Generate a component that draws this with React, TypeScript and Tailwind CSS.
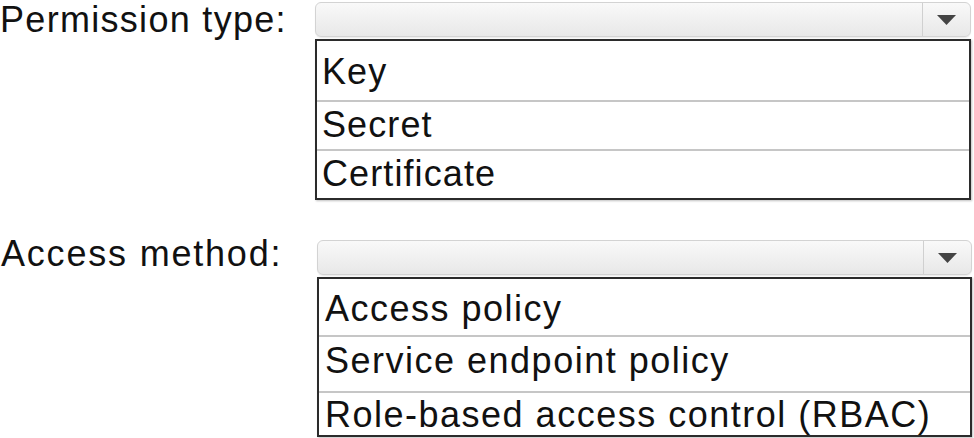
type Option = { label: string; h: string; pb: string };

interface FieldProps {
  label: string;
  labelClass: string;
  topPad: string;
  listPad: string;
  itemTracking: string;
  options: Option[];
}

const font = { fontFamily: '"Liberation Sans", Arial, sans-serif' };

const Field = ({ label, labelClass, topPad, listPad, itemTracking, options }: FieldProps) => (
  <div className="flex items-start">
    {/* Label */}
    <div className={`${labelClass} shrink-0 text-[36px] leading-[40px] text-[#111] whitespace-nowrap`}>
      {label}
    </div>

    {/* Dropdown + open list */}
    <div className={`flex-1 ${topPad}`}>
      <div className="flex h-[35px] rounded-[6px] border border-[#d3d3d3] bg-gradient-to-b from-[#f9f9f9] to-[#e8e8e8] shadow-[0_1px_1px_rgba(0,0,0,0.08)]">
        <div className="flex-1" />
        <div className="flex w-[48px] items-center justify-center border-l border-[#d0d0d0]">
          <svg width="19" height="10" viewBox="0 0 19 10">
            <path d="M0 0 H19 L9.5 10 Z" fill="#444" />
          </svg>
        </div>
      </div>

      <div className="mt-[2px] border-2 border-[#2b2b2b] bg-white shadow-[1px_1px_2px_rgba(0,0,0,0.25)]">
        {options.map((opt, i) => (
          <div key={opt.label}>
            {i > 0 && <div className="h-[2px] bg-[#c6c6c6]" />}
            <div className={`flex items-end ${opt.h} ${opt.pb} ${listPad}`}>
              <span className={`text-[36px] leading-[40px] ${itemTracking} text-[#111] whitespace-nowrap`}>
                {opt.label}
              </span>
            </div>
          </div>
        ))}
      </div>
    </div>
  </div>
);

export default function App() {
  return (
    <div className="w-[974px] h-[438px] overflow-hidden bg-white" style={font}>
      <Field
        label="Permission type:"
        labelClass="w-[315px] tracking-[1.3px]"
        topPad="pt-[2px] mr-[3px]"
        listPad="pl-[5px]"
        itemTracking="tracking-[1.1px]"
        options={[
          { label: 'Key', h: 'h-[59px]', pb: 'pb-[8px]' },
          { label: 'Secret', h: 'h-[47px]', pb: 'pb-[4px]' },
          { label: 'Certificate', h: 'h-[47px]', pb: 'pb-[4px]' },
        ]}
      />

      <div className="mt-[34px]">
        <Field
          label="Access method:"
          labelClass="w-[317px] pl-[1px] tracking-[1.8px]"
          topPad="pt-[6px] mr-[2px]"
          listPad="pl-[6px]"
          itemTracking="tracking-[1.5px]"
          options={[
            { label: 'Access policy', h: 'h-[56px]', pb: 'pb-[6px]' },
            { label: 'Service endpoint policy', h: 'h-[54px]', pb: 'pb-[10px]' },
            { label: 'Role-based access control (RBAC)', h: 'h-[42px]', pb: 'pb-0' },
          ]}
        />
      </div>
    </div>
  );
}
